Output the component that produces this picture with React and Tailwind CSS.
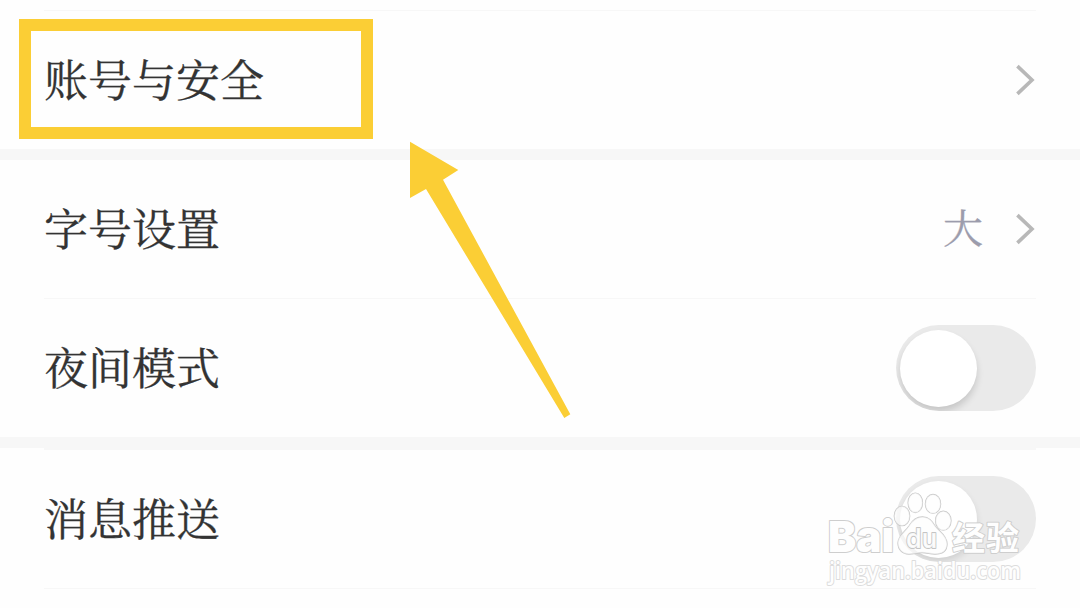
import { clsx } from "clsx";

// ==================================================
// Row label
// ==================================================
function Label({ children }) {
  return (
    <span className="pb-[5px] text-[44px] leading-none text-[#333333] [-webkit-text-stroke:0.3px_#333333]">
      {children}
    </span>
  );
}

function Arrow() {
  return (
    <svg viewBox="0 0 20 32" className="h-8 w-5" fill="none" stroke="#b8b8b8" strokeWidth="3.6">
      <path d="M1.4 2.1 L16 16 L1.4 29.9" />
    </svg>
  );
}

// ==================================================
// Switch in its off state
// ==================================================
function Toggle({ faded }) {
  return (
    <div className="h-[86px] w-[140px] overflow-hidden rounded-full bg-[#eaeaea] pl-1 pt-[5px]">
      <div
        className={clsx(
          "h-[77px] w-[77px] rounded-full bg-white",
          faded ? "shadow-[0_4px_7px_rgba(0,0,0,0.11)]" : "shadow-[0_5px_7px_rgba(0,0,0,0.15)]"
        )}
      />
    </div>
  );
}

function Row({ label, children }) {
  return (
    <div className="flex h-[138px] items-center justify-between px-11">
      <Label>{label}</Label>
      {children}
    </div>
  );
}

function Divider() {
  return <div className="mx-11 h-px bg-[#f7f7f7]" />;
}

function Gap() {
  return <div className="h-[11px] bg-[#f7f7f7]" />;
}

function Watermark() {
  return (
    <svg
      className="absolute left-[810px] top-[480px]"
      width="230"
      height="128"
      viewBox="810 480 230 128"
      fill="#fefefe"
      stroke="#cecece"
      strokeWidth="2"
      strokeLinejoin="round"
      paintOrder="stroke"
    >
      <text x="828" y="552" fontSize="43" fontWeight="900" textLength="66" lengthAdjust="spacingAndGlyphs" fontFamily="Inter, sans-serif">
        Bai
      </text>
      <g fillOpacity="0.7" strokeWidth="1.3" stroke="#c8c8c8">
        <ellipse cx="915.3" cy="502.8" rx="7.2" ry="9.7" />
        <ellipse cx="933" cy="503.9" rx="7.6" ry="9.5" />
        <ellipse cx="902" cy="516" rx="7.7" ry="9.7" />
        <ellipse cx="943.3" cy="520.7" rx="7.7" ry="9.5" />
        <path d="M922.5 517 C929 517 932 521 935 526 C938 531 947 535 947 544 C947 551 942 554 935 554 C930 554 927 552.5 922 552.5 C917 552.5 914 554 909 554 C902 554 898 549 898 543 C898 536 905 532 909 526 C912 521 916 517 922.5 517 Z" />
        <text x="906" y="548" fontSize="27" fontWeight="600" fillOpacity="0.9" stroke="#c4c4c4" strokeWidth="1.8" textLength="31" lengthAdjust="spacingAndGlyphs" fontFamily="Inter, sans-serif">
          du
        </text>
      </g>
      <text x="952" y="549.5" fontSize="33" fontWeight="700" textLength="67" fontFamily="Noto Sans CJK SC, sans-serif">
        经验
      </text>
      <text x="829" y="579" fontSize="23.5" fontWeight="600" textLength="192" stroke="#dcdcdc" lengthAdjust="spacingAndGlyphs" fontFamily="Open Sans, sans-serif">
        jingyan.baidu.com
      </text>
    </svg>
  );
}

export default function App() {
  return (
    <div className="relative h-[608px] w-[1080px] overflow-hidden bg-[#fefefe] pt-2.5 font-['Noto_Serif_CJK_SC','Source_Han_Serif_SC','Noto_Sans_CJK_SC',serif]">
      <Divider />
      <Row label="账号与安全">
        <Arrow />
      </Row>
      <Gap />
      <Row label="字号设置">
        <div className="flex items-center gap-[33px]">
          <span className="pb-[6px] text-[40px] leading-none text-[#9c9cac] [-webkit-text-stroke:0.3px_#9c9cac]">大</span>
          <Arrow />
        </div>
      </Row>
      <Divider />
      <Row label="夜间模式">
        <Toggle />
      </Row>
      <Gap />
      <div className="mx-11 h-0.5 bg-[#f7f7f7]" />
      <Row label="消息推送">
        <Toggle faded />
      </Row>
      <Divider />

      {/* Highlight frame and pointer */}
      <div className="absolute left-[19px] top-[19px] h-[120px] w-[354px] border-12 border-[#fbce35]" />
      <svg className="absolute left-[410px] top-[141px]" width="161" height="278" viewBox="410 141 161 278">
        <path d="M410 141.7 L458.3 170 L443 179.7 L570.3 414.3 L564.3 418 L426 189 L410 198 Z" fill="#fbce35" />
      </svg>
      <Watermark />
    </div>
  );
}
